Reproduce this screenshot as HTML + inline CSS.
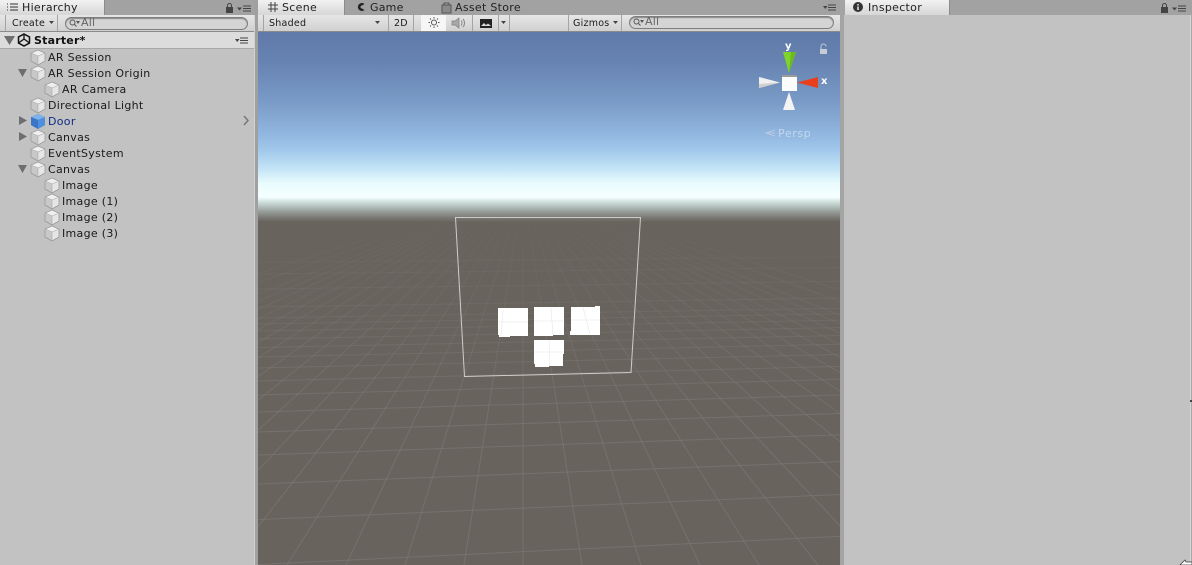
<!DOCTYPE html>
<html><head><meta charset="utf-8">
<style>
html,body{margin:0;padding:0;width:1192px;height:565px;overflow:hidden;background:#a2a2a2}
body{position:relative;font-family:"DejaVu Sans","Liberation Sans",sans-serif;font-size:11px;color:#1a1a1a}
.a{position:absolute}
.t{position:absolute;white-space:nowrap;line-height:14px;height:14px}
.s{font-size:9.500px;letter-spacing:.25px}
.tab{position:absolute;top:0;height:15px;background:linear-gradient(#f2f2f2,#d6d6d6);border-right:1px solid #8c8c8c;box-sizing:border-box}
.tb{position:absolute;top:15px;height:16px;background:linear-gradient(#e6e6e6,#d0d0d0);border-bottom:1px solid #8a8a8a;box-sizing:content-box}
.search{position:absolute;height:11px;border:1px solid #7d7d7d;border-radius:7px;background:#d4d4d4;box-shadow:inset 0 1px 1px #888}
.sep{position:absolute;top:15px;width:1px;height:16px;background:#a4a4a4}
svg{position:absolute;overflow:visible}
</style></head><body>

<!-- Left panel -->
<div class="a" style="left:0;top:15px;width:254px;height:550px;background:#c2c2c2"></div>
<div class="a" style="left:254px;top:0;width:4px;height:565px;background:#a0a0a0"></div>
<div class="a" style="left:254px;top:15px;width:1px;height:550px;background:#d2d2d2"></div>
<div class="tab" style="left:0;width:105px"></div>
<svg style="left:7px;top:3px" width="12" height="9"><path d="M0 1h1M3 1h8M0 4h1M3 4h8M0 7h1M3 7h8" stroke="#333" fill="none"/></svg>
<div class="t" style="left:22px;top:1px;letter-spacing:.3px;color:#222">Hierarchy</div>
<svg style="left:225px;top:3px" width="29" height="10"><path d="M1 4h7v6H1z" fill="#444"/><path d="M2.500 4V2.500a2 2 0 0 1 4 0V4" stroke="#444" fill="none"/><path d="M12 4.500h5l-2.500 3z" fill="#444"/><path d="M18 3h8M18 5.500h8M18 8h8" stroke="#444"/></svg>

<div class="tb" style="left:0;width:254px"></div>
<div class="sep" style="left:5px"></div>
<div class="sep" style="left:57px"></div>
<div class="t s" style="left:12px;top:17px">Create</div>
<svg style="left:49px;top:21px" width="6" height="4"><path d="M0 0h5l-2.500 3z" fill="#444"/></svg>
<div class="search" style="left:65px;top:17px;width:181px"></div>
<svg style="left:69px;top:19px" width="12" height="9"><circle cx="3.500" cy="3.500" r="2.500" stroke="#555" fill="none"/><path d="M5.500 5.500l2 2" stroke="#555"/><path d="M7 2h4L9 5z" fill="#555"/></svg>
<div class="t" style="left:81px;top:16px;color:#666;letter-spacing:.2px">All</div>

<div class="a" style="left:0;top:32px;width:254px;height:17px;background:#dcdcdc;border-bottom:1px solid #a8a8a8;box-sizing:border-box"></div>
<svg style="left:4px;top:36px" width="11" height="10"><path d="M0 0h11L5.500 9z" fill="#6e6e6e"/></svg>
<svg style="left:17px;top:33px" width="14" height="14" viewBox="0 0 14 14"><path d="M7 1l5.500 3v6L7 13 1.500 10V4z" fill="none" stroke="#111" stroke-width="1.500"/><path d="M7 1v5l-5.500 4M7 6l5.500 4" stroke="#111" stroke-width="1.300" fill="none"/></svg>
<div class="t" style="left:34px;top:34px;font-weight:bold;letter-spacing:.2px;color:#111">Starter*</div>
<svg style="left:235px;top:37px" width="14" height="7"><path d="M0 2h4.500l-2.250 3z" fill="#444"/><path d="M5 1h8M5 3.500h8M5 6h8" stroke="#444"/></svg>

<!-- hierarchy rows -->
<svg style="left:0;top:0" width="254" height="245">
<defs>
<g id="cube"><path d="M8 0L15 3v8l-7 4-7-4V3z" fill="#e4e4e4"/><path d="M8 0L15 3 8 6 1 3z" fill="#efefef"/><path d="M1 3l7 3v9l-7-4z" fill="#c8c8c8"/><path d="M8 6l7-3v8l-7 4z" fill="#e6e6e6"/><path d="M8 0L15 3v8l-7 4-7-4V3z" fill="none" stroke="#9a9a9a" stroke-width=".8"/><path d="M8 6L1 3M8 6l7-3M8 6v9" fill="none" stroke="#a8a8a8" stroke-width=".6"/></g>
</defs>
<use href="#cube" x="30" y="50"/>
<use href="#cube" x="30" y="66"/>
<use href="#cube" x="44" y="82"/>
<use href="#cube" x="30" y="98"/>
<g transform="translate(30,114)"><path d="M8 0L15 3v8l-7 4-7-4V3z" fill="#3f7fd0"/><path d="M8 0L15 3 8 6 1 3z" fill="#7fb2ea"/><path d="M1 3l7 3v9l-7-4z" fill="#3a76c8"/><path d="M8 6l7-3v8l-7 4z" fill="#4f8fdc"/></g>
<use href="#cube" x="30" y="130"/>
<use href="#cube" x="30" y="146"/>
<use href="#cube" x="30" y="162"/>
<use href="#cube" x="44" y="178"/>
<use href="#cube" x="44" y="194"/>
<use href="#cube" x="44" y="210"/>
<use href="#cube" x="44" y="226"/>
<path d="M18 69h9l-4.500 8z" fill="#6e6e6e"/>
<path d="M19 116v9l8-4.500z" fill="#6e6e6e"/>
<path d="M19 132v9l8-4.500z" fill="#6e6e6e"/>
<path d="M18 165h9l-4.500 8z" fill="#6e6e6e"/>
<path d="M244 116l4 4.500-4 4.500" stroke="#777" stroke-width="1.500" fill="none"/>
</svg>
<div class="t" style="left:48px;top:51px;letter-spacing:.3px">AR Session</div>
<div class="t" style="left:48px;top:67px;letter-spacing:.3px">AR Session Origin</div>
<div class="t" style="left:62px;top:83px;letter-spacing:.3px">AR Camera</div>
<div class="t" style="left:48px;top:99px;letter-spacing:.3px">Directional Light</div>
<div class="t" style="left:48px;top:115px;letter-spacing:.3px;color:#0f2d85">Door</div>
<div class="t" style="left:48px;top:131px;letter-spacing:.3px">Canvas</div>
<div class="t" style="left:48px;top:147px;letter-spacing:.3px">EventSystem</div>
<div class="t" style="left:48px;top:163px;letter-spacing:.3px">Canvas</div>
<div class="t" style="left:62px;top:179px;letter-spacing:.3px">Image</div>
<div class="t" style="left:62px;top:195px;letter-spacing:.3px">Image (1)</div>
<div class="t" style="left:62px;top:211px;letter-spacing:.3px">Image (2)</div>
<div class="t" style="left:62px;top:227px;letter-spacing:.3px">Image (3)</div>

<!-- Scene tabs -->
<div class="tab" style="left:258px;width:87px"></div>
<svg style="left:268px;top:2px" width="11" height="11"><path d="M3 0v10M7 0v10M0 3h10M0 7h10" stroke="#444" fill="none"/></svg>
<div class="t" style="left:282px;top:1px;letter-spacing:.3px;color:#222">Scene</div>
<svg style="left:356px;top:2px" width="10" height="10"><path d="M8.500 2A4 4 0 1 0 8.500 8L6 6.500a1.500 1.500 0 1 1 0-3z" fill="#222"/></svg>
<div class="t" style="left:370px;top:1px;letter-spacing:.2px;color:#222">Game</div>
<svg style="left:441px;top:1px" width="12" height="12"><path d="M1 4h9v8H1z" fill="#8a8a8a" stroke="#555"/><path d="M3 4V2h5v2" stroke="#555" fill="none"/></svg>
<div class="t" style="left:455px;top:1px;letter-spacing:.3px;color:#222">Asset Store</div>
<svg style="left:823px;top:4px" width="14" height="7"><path d="M0 2h4.500l-2.250 3z" fill="#444"/><path d="M5 1h8M5 3.500h8M5 6h8" stroke="#444"/></svg>

<!-- Scene toolbar -->
<div class="tb" style="left:258px;width:582px"></div>
<div class="sep" style="left:263px"></div>
<div class="sep" style="left:388px"></div>
<div class="sep" style="left:413px"></div>
<div class="sep" style="left:472px"></div>
<div class="sep" style="left:509px"></div>
<div class="sep" style="left:568px"></div>
<div class="sep" style="left:621px"></div>
<div class="t s" style="left:269px;top:17px">Shaded</div>
<svg style="left:375px;top:21px" width="6" height="4"><path d="M0 0h5l-2.500 3z" fill="#444"/></svg>
<div class="t s" style="left:394px;top:17px">2D</div>
<div class="a" style="left:421px;top:15px;width:25px;height:16px;background:#f6f6f6"></div>
<svg style="left:428px;top:17px" width="12" height="11"><circle cx="6" cy="5.500" r="2.500" fill="none" stroke="#555"/><path d="M6 0v1.500M6 9.500V11M0.500 5.500H2M10 5.500h1.500M2 1.500l1 1M9 8.500l1 1M10 1.500l-1 1M3 8.500l-1 1" stroke="#555"/></svg>
<svg style="left:452px;top:17px" width="15" height="12"><path d="M0 4h3l4-3v10L3 8H0z" fill="#a8a8a8" stroke="#808080" stroke-width=".7"/><path d="M9 3.500a3.500 3.500 0 0 1 0 5M11 2a6 6 0 0 1 0 8" stroke="#888" fill="none"/></svg>
<svg style="left:480px;top:19px" width="12" height="9"><path d="M0 0h12v9H0z" fill="#222"/><path d="M1 7l3-3 2 2 2-1.500 3 2.500z" fill="#d8d8d8"/></svg>
<div class="sep" style="left:498px"></div>
<svg style="left:501px;top:21px" width="6" height="4"><path d="M0 0h5l-2.500 3z" fill="#444"/></svg>
<div class="t s" style="left:573px;top:17px">Gizmos</div>
<svg style="left:613px;top:21px" width="6" height="4"><path d="M0 0h5l-2.500 3z" fill="#444"/></svg>
<div class="search" style="left:629px;top:16px;width:203px"></div>
<svg style="left:633px;top:18px" width="12" height="9"><circle cx="3.500" cy="3.500" r="2.500" stroke="#555" fill="none"/><path d="M5.500 5.500l2 2" stroke="#555"/><path d="M7 2h4L9 5z" fill="#555"/></svg>
<div class="t" style="left:645px;top:15px;color:#666;letter-spacing:.2px">All</div>

<!-- Scene viewport -->
<div class="a" style="left:258px;top:32px;width:582px;height:533px;overflow:hidden;background:#69635d">
  <div class="a" style="left:0;top:0;width:582px;height:190px;background:linear-gradient(#5f7aa8 0,#6783b1 30px,#7a9bc7 70px,#93b9e2 105px,#a4cbec 120px,#c6e6f6 138px,#e8fbfd 151px,#f6ffff 165px,#cfe0dc 170px,#a0a8a4 178px,#7d7c78 185px,#69635d 190px)"></div>
  <svg style="left:-258px;top:-32px" width="1192" height="565">
    <defs><linearGradient id="f" x1="0" y1="222" x2="0" y2="420" gradientUnits="userSpaceOnUse"><stop offset="0" stop-color="#7c7a76" stop-opacity=".06"/><stop offset="1" stop-color="#7c7a76" stop-opacity=".6"/></linearGradient></defs>
    <g stroke="url(#f)" stroke-width="1" fill="none">
      <path d="M523 222V565M527.400 217L582 565M531.800 217L641 565M536.200 217L700 565M540.600 217L759 565M545 217L818 565M549.400 217L877 565M553.800 217L936 565M558.200 217L995 565M562.600 217L1054 565M567 217L1113 565M571.400 217L1172 565M575.800 217L1231 565M580.200 217L1290 565M584.600 217L1349 565M589 217L1408 565M593.400 217L1467 565M602.200 217L1585 565M611 217L1703 565"/>
      <path d="M518.600 217L464 565M514.200 217L405 565M509.800 217L346 565M505.400 217L287 565M501 217L228 565M496.600 217L169 565M492.200 217L110 565M487.800 217L51 565M483.400 217L-8 565M479 217L-67 565M474.600 217L-126 565M470.200 217L-185 565M465.800 217L-244 565M461.400 217L-303 565M457 217L-362 565M452.600 217L-421 565M443.800 217L-539 565M435 217L-657 565"/>
      <path d="M258 564.500L840 536.400M258 519.600L840 494.500M258 484L840 461.600M258 455L840 434.800M258 432L840 413.500M258 412L840 395M258 395L840 379.300M258 381L840 366.400M258 368L840 354.400M258 357L840 344.200M258 347.500L840 335.500M258 339L840 327.600M258 331L840 320.200M258 324L840 313.700M258 318L840 308.200M258 307L840 298M258 289L840 281.400M258 274L840 267.500M258 262.500L840 256.900"/>
    </g>
    <!-- canvas outline -->
    <path d="M455.500 217.500H640.500L631 372.500L464.500 376.500Z" fill="none" stroke="#cfcdca" stroke-width="1"/>
    <!-- images -->
    <path d="M498 308H528V336H510V337H499V335H498Z" fill="#fff"/>
    <path d="M534 307H564V335H553V336H534Z" fill="#fff"/>
    <path d="M571 307H595V306H600V335H570V331H571Z" fill="#fff"/>
    <path d="M539 340H564V354H563V366H549V367H535V364H534V340Z" fill="#fff"/>
    <g stroke="#e6e6e6" stroke-width=".6" fill="none"><path d="M503 310L501 336M498 322H528M534 321H564M551 308L553 335M571 320H600M583 307L590 334M534 352H563M549 340L550 366"/></g>
    <!-- gizmo -->
    <path d="M783 52H796L789 73Z" fill="#7fd42a"/>
    <path d="M791 52H796L789 73Z" fill="#6cb820"/>
    <path d="M818 77V88L797 82.500Z" fill="#e8401c"/>
    <path d="M759 77V88L780 82.500Z" fill="#f0f0f0"/>
    <path d="M759 84V88L780 82.500Z" fill="#d0d0d0"/>
    <path d="M789 92L783 110H795Z" fill="#f4f4f4"/>
    <path d="M782 75H797V91H782Z" fill="#fbfbfb"/>
    <path d="M782 75H797V77H782Z" fill="#9a9a9a"/>
    <path d="M820 49H827V54H820Z" fill="#c6ccd6"/>
    <path d="M821 49V46.500a2.500 2.500 0 0 1 5 0" stroke="#c6ccd6" fill="none"/>
    <path d="M775 130L766 133L775 136M766 133H775" stroke="#c0cde0" stroke-width=".8" fill="none"/>
  </svg>
</div>
<div class="t" style="left:785px;top:40px;font-weight:bold;font-size:10px;color:#fff">y</div>
<div class="t" style="left:821px;top:75px;font-weight:bold;font-size:10px;color:#fff">x</div>
<div class="t" style="left:778px;top:127px;color:rgba(255,255,255,.45);letter-spacing:.6px">Persp</div>

<!-- Divider and inspector -->
<div class="a" style="left:840px;top:0;width:4px;height:565px;background:#a4a4a4"></div>
<div class="a" style="left:844px;top:15px;width:348px;height:550px;background:#c2c2c2"></div>
<div class="a" style="left:1190px;top:15px;width:1px;height:550px;background:#d6d6d6"></div>
<div class="a" style="left:1191px;top:15px;width:1px;height:550px;background:#a8a8a8"></div>
<div class="a" style="left:1190px;top:400px;width:2px;height:2px;background:#444"></div>
<div class="tab" style="left:845px;width:105px"></div>
<svg style="left:853px;top:2px" width="10" height="10"><circle cx="5" cy="5" r="5" fill="#333"/><path d="M5 2v1.500M5 4.500V8" stroke="#eee" stroke-width="1.500"/></svg>
<div class="t" style="left:868px;top:1px;letter-spacing:.3px;color:#222">Inspector</div>
<svg style="left:1160px;top:3px" width="29" height="10"><path d="M1 4h7v6H1z" fill="#444"/><path d="M2.500 4V2.500a2 2 0 0 1 4 0V4" stroke="#444" fill="none"/><path d="M12 4.500h5l-2.500 3z" fill="#444"/><path d="M18 3h8M18 5.500h8M18 8h8" stroke="#444"/></svg>
<svg style="left:1180px;top:560px" width="12" height="5"><path d="M0 5L5 0L6 2H12V5Z" fill="#fff" stroke="#333" stroke-width=".7"/></svg>
</body></html>
